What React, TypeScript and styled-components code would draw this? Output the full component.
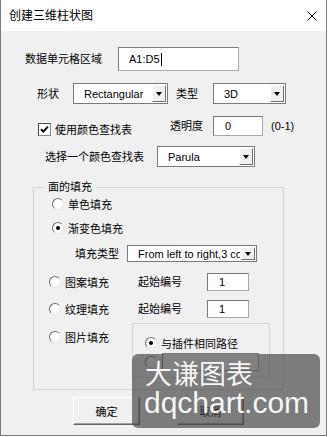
import React from 'react';
import styled, { createGlobalStyle } from 'styled-components';

const GlobalStyle = createGlobalStyle`
  html, body {
    margin: 0;
    padding: 0;
    background: #fff;
  }
`;

// Window frame
const Window = styled.div`
  position: relative;
  width: 327px;
  height: 436px;
  box-sizing: border-box;
  border: 1px solid #7a7a7a;
  border-top: none;
  background: #f0f0f0;
  display: flex;
  flex-direction: column;
  font-family: "Liberation Sans", "Noto Sans CJK SC", sans-serif;
  font-size: 11px;
  color: #000;
  overflow: hidden;
`;

const TitleBar = styled.div`
  height: 31px;
  flex-shrink: 0;
  background: #fff;
  display: flex;
  align-items: center;
  justify-content: space-between;
  padding: 0 9px 0 8px;
`;

const Title = styled.span`
  font-size: 12px;
  line-height: 14px;
  margin-top: 1px;
`;

const Body = styled.div`
  display: flex;
  flex-direction: column;
`;

const Row = styled.div<{ $top: number; $left: number; $h: number }>`
  display: flex;
  align-items: center;
  height: ${p => p.$h}px;
  margin-top: ${p => p.$top}px;
  padding-left: ${p => p.$left}px;
`;

const Label = styled.span<{ $gap?: number; $w?: number }>`
  white-space: nowrap;
  line-height: 14px;
  margin-right: ${p => p.$gap ?? 0}px;
  ${p => (p.$w ? `width: ${p.$w}px; flex-shrink: 0;` : '')}
`;

const TextBox = styled.div<{ $w: number; $h: number; $pad?: number }>`
  box-sizing: border-box;
  width: ${p => p.$w}px;
  height: ${p => p.$h}px;
  display: flex;
  align-items: center;
  padding-left: ${p => p.$pad ?? 10}px;
  background: #fff;
  border: 1px solid;
  border-color: #7a7a7a #a9a9a9 #a9a9a9 #7a7a7a;
  white-space: nowrap;
`;

const Caret = styled.span`
  width: 1px;
  height: 13px;
  margin-left: 1px;
  background: #000;
`;

const Combo = styled.div<{ $w: number; $h: number }>`
  box-sizing: border-box;
  width: ${p => p.$w}px;
  height: ${p => p.$h}px;
  display: flex;
  background: #fff;
  border: 1px solid #7a7a7a;
`;

const ComboText = styled.span`
  flex: 1;
  min-width: 0;
  overflow: hidden;
  white-space: nowrap;
  padding-left: 10px;
  display: flex;
  align-items: center;
`;

const ComboButton = styled.span`
  box-sizing: border-box;
  width: 14px;
  margin: 1px;
  flex-shrink: 0;
  background: #f0f0f0;
  border: 1px solid;
  border-color: #fff #6f6f6f #6f6f6f #fff;
  display: flex;
  align-items: center;
  justify-content: center;

  &::after {
    content: '';
    border-left: 3.5px solid transparent;
    border-right: 3.5px solid transparent;
    border-top: 4px solid #000;
  }
`;

const CheckOption = styled.label<{ $gap?: number }>`
  display: flex;
  align-items: center;
  gap: 4px;
  margin-top: 6px;
  margin-right: ${p => p.$gap ?? 0}px;
`;

const CheckBox = styled.span`
  box-sizing: border-box;
  width: 13px;
  height: 13px;
  background: #fff;
  border: 1px solid;
  border-color: #4a4a4a #8a8a8a #8a8a8a #4a4a4a;
  display: flex;
`;

const Option = styled.label<{ $w?: number; $top?: number }>`
  display: flex;
  align-items: center;
  gap: 4px;
  height: 14px;
  white-space: nowrap;
  ${p => (p.$w ? `width: ${p.$w}px; flex-shrink: 0;` : '')}
  margin-top: ${p => p.$top ?? 0}px;
`;

const Radio = styled.span<{ $on?: boolean }>`
  box-sizing: border-box;
  width: 12px;
  height: 12px;
  border-radius: 50%;
  background: #fff;
  border: 1px solid;
  border-color: #6d6d6d #e6e6e6 #e6e6e6 #6d6d6d;
  display: flex;
  align-items: center;
  justify-content: center;

  &::after {
    content: '';
    width: 4px;
    height: 4px;
    border-radius: 50%;
    background: ${p => (p.$on ? '#000' : 'transparent')};
  }
`;

const GroupBox = styled.fieldset`
  box-sizing: border-box;
  width: 251px;
  margin: 13px 0 0 32px;
  padding: 0 0 11px 0;
  border: 1px solid #d5d5d5;
  display: flex;
  flex-direction: column;
  min-width: 0;
`;

const Legend = styled.legend`
  margin-left: 10px;
  padding: 0 4px;
  line-height: 14px;
`;

const GroupRow = styled.div<{ $top: number; $left: number; $h: number; $start?: boolean }>`
  display: flex;
  align-items: ${p => (p.$start ? 'flex-start' : 'center')};
  height: ${p => p.$h}px;
  margin-top: ${p => p.$top}px;
  padding-left: ${p => p.$left}px;
`;

const InnerGroup = styled.div`
  box-sizing: border-box;
  width: 138px;
  height: 55px;
  border: 1px solid #d5d5d5;
  padding: 12px 0 0 12px;
  display: flex;
  flex-direction: column;
  gap: 3px;
`;

const InnerRow = styled.div`
  display: flex;
  align-items: center;
  gap: 5px;
  height: 18px;
`;

const ButtonRow = styled.div`
  display: flex;
  gap: 37px;
  margin-top: 7px;
  padding-left: 72px;
`;

const Button = styled.button`
  box-sizing: border-box;
  width: 67px;
  height: 28px;
  padding: 0;
  font: inherit;
  color: #000;
  background: #f0f0f0;
  border: 1px solid;
  border-color: #fff #646464 #646464 #fff;
  box-shadow: inset -1px -1px 0 #a0a0a0;
`;

const Watermark = styled.div`
  position: absolute;
  left: 131px;
  top: 354px;
  width: 188px;
  height: 74px;
  box-sizing: border-box;
  border-radius: 6px;
  background: rgba(64, 64, 64, 0.66);
  color: rgba(255, 255, 255, 0.95);
  padding: 4px 0 0 12px;
  display: flex;
  flex-direction: column;
`;

const MarkTitle = styled.span`
  font-family: "Noto Sans CJK SC", sans-serif;
  font-size: 27px;
  line-height: 29px;
  padding-left: 1px;
`;

const MarkUrl = styled.span`
  font-family: "Liberation Sans", sans-serif;
  font-size: 30px;
  line-height: 32px;
`;

export default function App() {
  return (
    <>
      <GlobalStyle />
      <Window>
        <TitleBar>
          <Title>创建三维柱状图</Title>
          <svg width="10" height="10" viewBox="0 0 10 10">
            <path d="M0.5 0.5 L9.5 9.5 M9.5 0.5 L0.5 9.5" stroke="#000" strokeWidth="1" fill="none" />
          </svg>
        </TitleBar>
        <Body>
          <Row $top={16} $left={24} $h={24}>
            <Label $gap={16}>数据单元格区域</Label>
            <TextBox $w={121} $h={24}>
              A1:D5<Caret />
            </TextBox>
          </Row>

          <Row $top={12} $left={36} $h={21}>
            <Label $gap={14}>形状</Label>
            <Combo $w={95} $h={21}>
              <ComboText>Rectangular</ComboText>
              <ComboButton />
            </Combo>
            <Label $gap={15} style={{ marginLeft: 8 }}>类型</Label>
            <Combo $w={73} $h={21}>
              <ComboText>3D</ComboText>
              <ComboButton />
            </Combo>
          </Row>

          <Row $top={12} $left={37} $h={20}>
            <CheckOption $gap={38}>
              <CheckBox>
                <svg width="11" height="11" viewBox="0 0 11 11">
                  <path d="M2 5.2 L4.3 7.6 L9 2.6" stroke="#000" strokeWidth="1.9" fill="none" />
                </svg>
              </CheckBox>
              使用颜色查找表
            </CheckOption>
            <Label $gap={10}>透明度</Label>
            <TextBox $w={50} $h={20} $pad={11}>0</TextBox>
            <Label style={{ marginLeft: 8 }}>(0-1)</Label>
          </Row>

          <Row $top={10} $left={44} $h={21}>
            <Label $gap={13}>选择一个颜色查找表</Label>
            <Combo $w={98} $h={21}>
              <ComboText>Parula</ComboText>
              <ComboButton />
            </Combo>
          </Row>

          <GroupBox>
            <Legend>面的填充</Legend>
            <GroupRow $top={3} $left={18} $h={14}>
              <Option>
                <Radio />
                单色填充
              </Option>
            </GroupRow>
            <GroupRow $top={10} $left={18} $h={14}>
              <Option>
                <Radio $on />
                渐变色填充
              </Option>
            </GroupRow>
            <GroupRow $top={10} $left={41} $h={17}>
              <Label $gap={8}>填充类型</Label>
              <Combo $w={130} $h={17}>
                <ComboText>From left to right,3 colors</ComboText>
                <ComboButton />
              </Combo>
            </GroupRow>
            <GroupRow $top={11} $left={15} $h={18}>
              <Option $w={89}>
                <Radio />
                图案填充
              </Option>
              <Label $w={69}>起始编号</Label>
              <TextBox $w={42} $h={18} $pad={11}>1</TextBox>
            </GroupRow>
            <GroupRow $top={9} $left={15} $h={18}>
              <Option $w={89}>
                <Radio />
                纹理填充
              </Option>
              <Label $w={69}>起始编号</Label>
              <TextBox $w={42} $h={18} $pad={11}>1</TextBox>
            </GroupRow>
            <GroupRow $top={5} $left={15} $h={55} $start>
              <Option $w={83} $top={7}>
                <Radio />
                图片填充
              </Option>
              <InnerGroup>
                <Option>
                  <Radio $on />
                  与插件相同路径
                </Option>
                <InnerRow>
                  <Radio />
                  <TextBox $w={97} $h={18} />
                </InnerRow>
              </InnerGroup>
            </GroupRow>
          </GroupBox>

          <ButtonRow>
            <Button>确定</Button>
            <Button>取消</Button>
          </ButtonRow>
        </Body>

        <Watermark>
          <MarkTitle>大谦图表</MarkTitle>
          <MarkUrl>dqchart.com</MarkUrl>
        </Watermark>
      </Window>
    </>
  );
}
